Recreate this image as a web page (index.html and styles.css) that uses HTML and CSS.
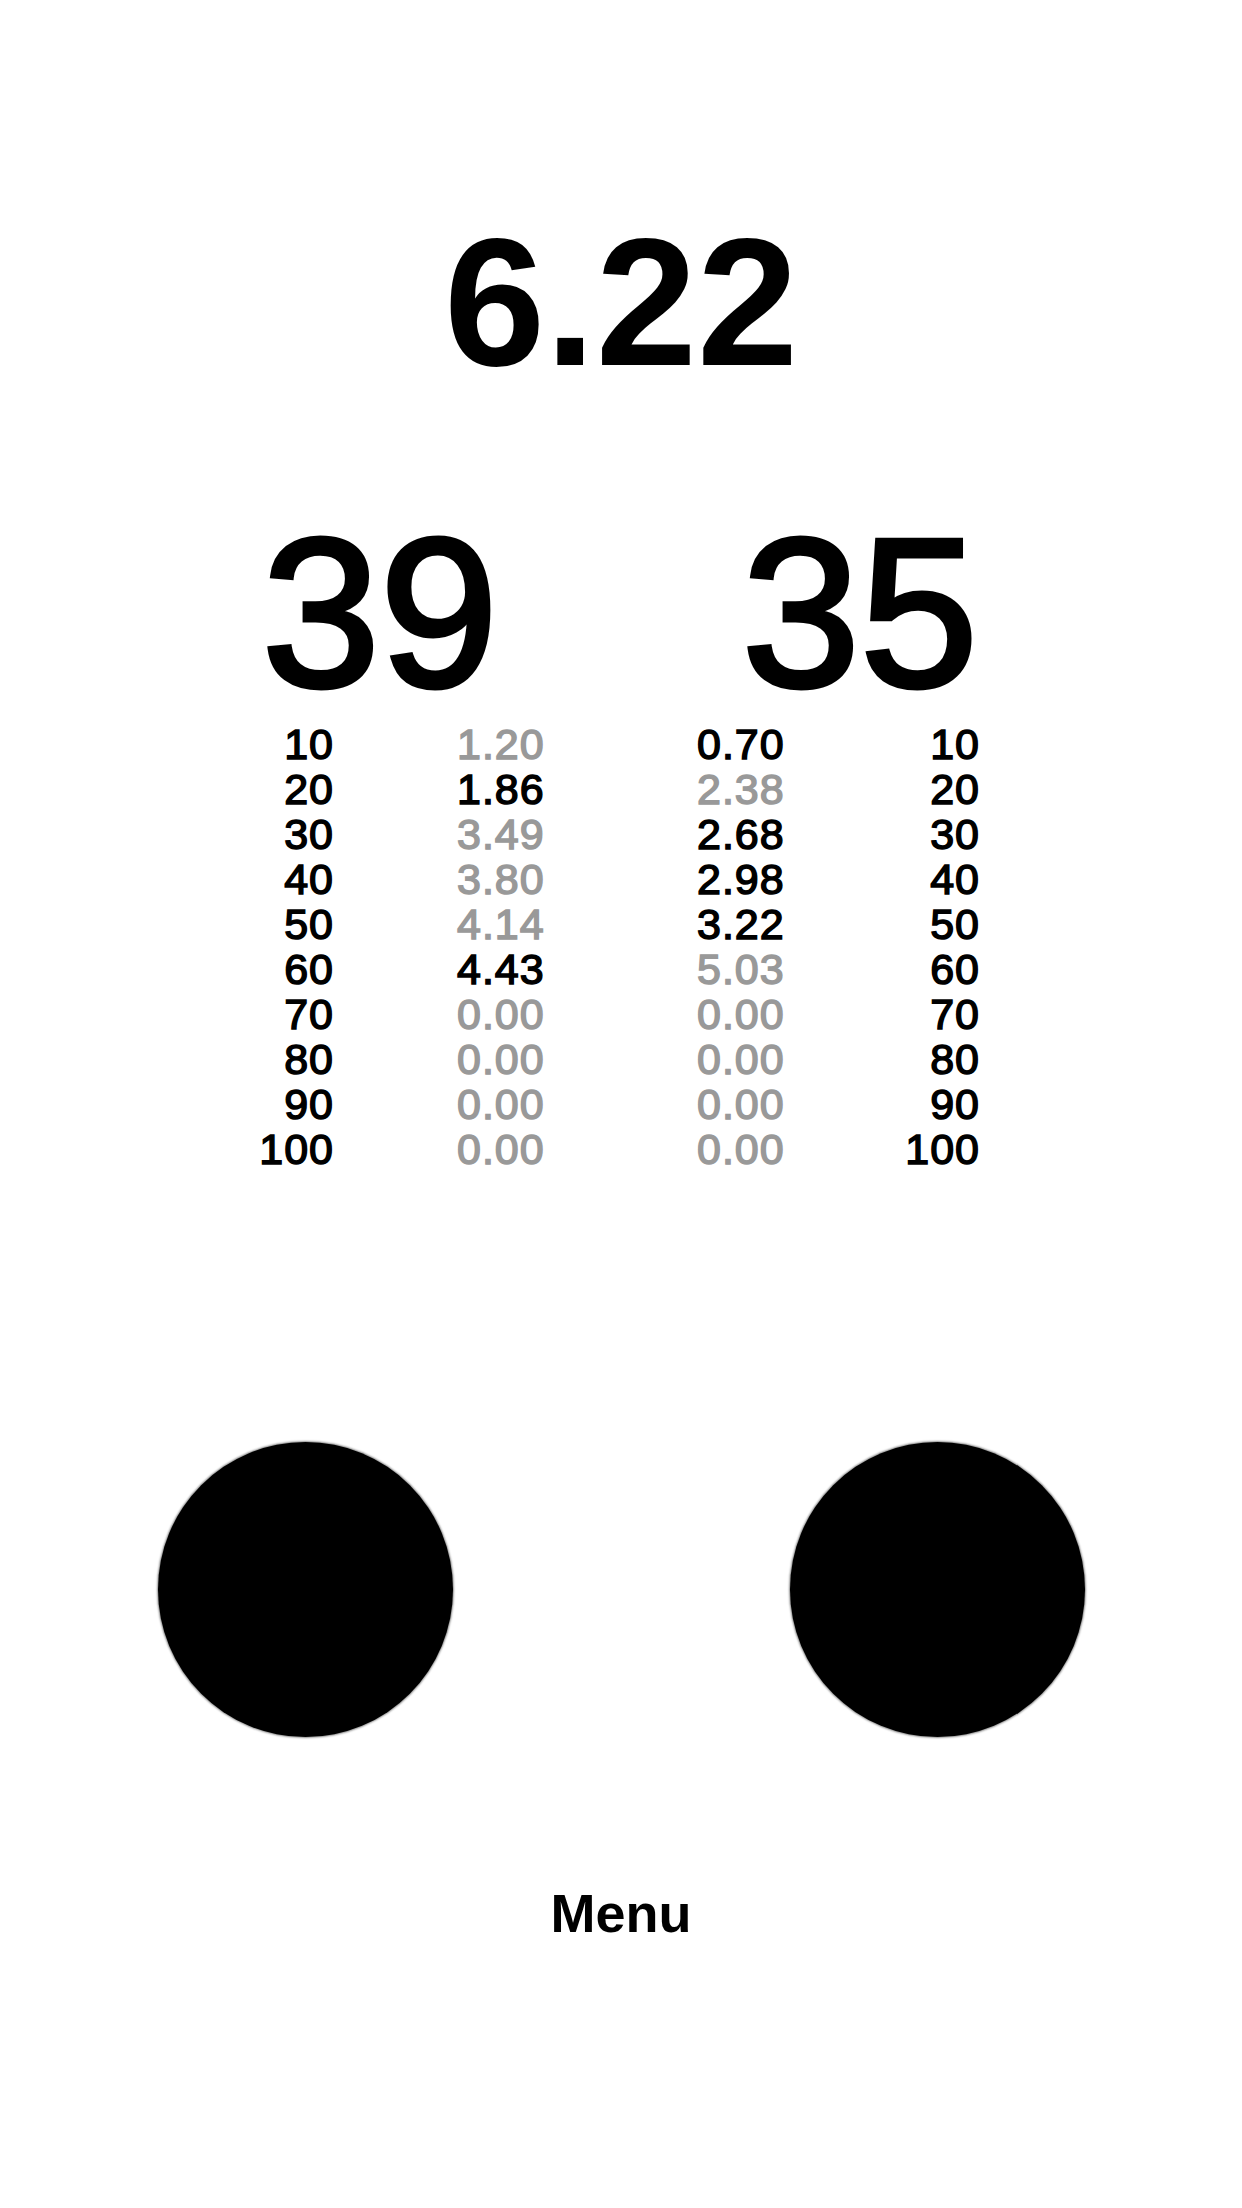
FILE: index.html
```html
<!DOCTYPE html>
<html>
<head>
<meta charset="utf-8">
<link rel="stylesheet" href="styles.css">
</head>
<body>
<main class="screen">
  <div class="total">6.22</div>
  <section class="stats">
    <div class="half">
      <div class="big">39</div>
      <div class="table table-left">
        <span class="n">10</span><span class="v dim">1.20</span>
        <span class="n">20</span><span class="v">1.86</span>
        <span class="n">30</span><span class="v dim">3.49</span>
        <span class="n">40</span><span class="v dim">3.80</span>
        <span class="n">50</span><span class="v dim">4.14</span>
        <span class="n">60</span><span class="v">4.43</span>
        <span class="n">70</span><span class="v dim">0.00</span>
        <span class="n">80</span><span class="v dim">0.00</span>
        <span class="n">90</span><span class="v dim">0.00</span>
        <span class="n">100</span><span class="v dim">0.00</span>
      </div>
    </div>
    <div class="half">
      <div class="big">35</div>
      <div class="table table-right">
        <span class="v">0.70</span><span class="n">10</span>
        <span class="v dim">2.38</span><span class="n">20</span>
        <span class="v">2.68</span><span class="n">30</span>
        <span class="v">2.98</span><span class="n">40</span>
        <span class="v">3.22</span><span class="n">50</span>
        <span class="v dim">5.03</span><span class="n">60</span>
        <span class="v dim">0.00</span><span class="n">70</span>
        <span class="v dim">0.00</span><span class="n">80</span>
        <span class="v dim">0.00</span><span class="n">90</span>
        <span class="v dim">0.00</span><span class="n">100</span>
      </div>
    </div>
  </section>
  <section class="buttons">
    <div class="dot"></div>
    <div class="dot"></div>
  </section>
  <div class="menu">Menu</div>
</main>
</body>
</html>
```

FILE: styles.css
```css
html, body {
  margin: 0;
  padding: 0;
  background: #ffffff;
}

body {
  font-family: "Liberation Sans", Arial, Helvetica, sans-serif;
  color: #000000;
}

.screen {
  width: 1242px;
  height: 2208px;
  padding-top: 211px;
  box-sizing: border-box;
}

.total {
  font-size: 182px;
  line-height: 182px;
  font-weight: 700;
  text-align: center;
}

.stats {
  display: flex;
  padding: 0 141px 0 140px;
  margin-top: 114px;
}

.half {
  width: 480px;
  display: flex;
  flex-direction: column;
}

.big {
  font-size: 212px;
  line-height: 212px;
  font-weight: 400;
  -webkit-text-stroke: 5px #000;
  text-align: center;
}

.table {
  display: grid;
  margin-top: 3px;
  font-size: 43px;
  line-height: 45px;
  font-weight: 400;
  -webkit-text-stroke: 1.5px currentColor;
  letter-spacing: 1px;
}

.table-left {
  grid-template-columns: 194px 1fr;
}

.table-left .v {
  padding-left: 123px;
}

.table-right {
  padding-left: 77px;
  grid-template-columns: 183px 100px;
}

.n {
  text-align: right;
}

.v {
  text-align: left;
}

.dim {
  color: #999999;
}

.buttons {
  display: flex;
  gap: 337px;
  padding-left: 158px;
  margin-top: 270px;
}

.dot {
  width: 295px;
  height: 295px;
  border-radius: 50%;
  background: #000000;
  box-shadow: 0 0 2px 1px rgba(0, 0, 0, 0.45);
}

.menu {
  margin-top: 149px;
  font-size: 54px;
  line-height: 54px;
  font-weight: 700;
  text-align: center;
}
```
